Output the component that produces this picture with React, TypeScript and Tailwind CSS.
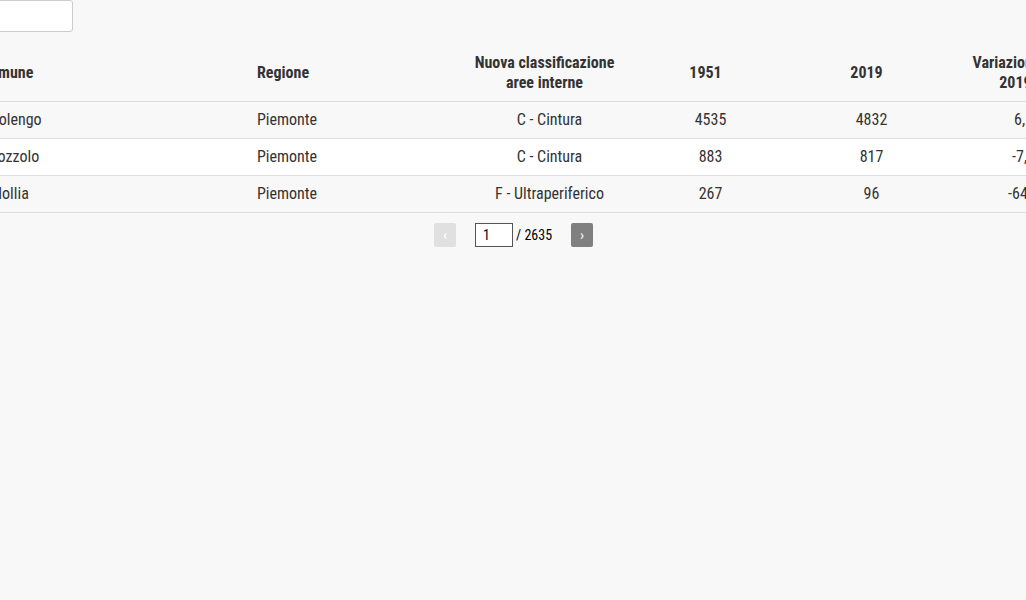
import React from 'react';

type Row = {
  comune: string;
  regione: string;
  classe: string;
  y1951: string;
  y2019: string;
  variazione: string;
};

const rows: Row[] = [
  { comune: 'Bolengo', regione: 'Piemonte', classe: 'C - Cintura', y1951: '4535', y2019: '4832', variazione: '6,55%' },
  { comune: 'Lozzolo', regione: 'Piemonte', classe: 'C - Cintura', y1951: '883', y2019: '817', variazione: '-7,47%' },
  { comune: 'Mollia', regione: 'Piemonte', classe: 'F - Ultraperiferico', y1951: '267', y2019: '96', variazione: '-64,04%' },
];

const th = 'pt-[11px] pb-[8px] font-bold text-[16px] whitespace-nowrap font-stretch-condensed';
const td = 'px-[10px] py-2 font-stretch-[78%]';

const App = () => {
  return (
    <div
      className="w-[1026px] h-[600px] overflow-hidden bg-[#f8f8f8] text-[#333]"
      style={{ fontFamily: 'Roboto, "Liberation Sans", sans-serif' }}
    >
      <div className="-ml-[29px] w-[1142px]">
        <input
          className="block w-[102px] h-[32px] bg-white border border-[#ccc] rounded-[3px]"
          readOnly
        />

        <table className="mt-[10px] w-[1142px] table-fixed border-collapse text-[16px] leading-5">
          <colgroup>
            <col className="w-[276px]" />
            <col className="w-[222px]" />
            <col className="w-[161px]" />
            <col className="w-[161px]" />
            <col className="w-[161px]" />
            <col className="w-[161px]" />
          </colgroup>
          <thead>
            <tr className="border-b border-[#ddd]">
              <th className={`${th} pl-[10px] pr-5 text-left`}>Comune</th>
              <th className={`${th} pl-[10px] pr-5 text-left`}>Regione</th>
              <th className={`${th} pl-[5px] pr-[15px] text-center`}>
                Nuova classificazione
                <br />
                aree interne
              </th>
              <th className={`${th} pl-[5px] pr-[15px] text-center`}>1951</th>
              <th className={`${th} pl-[5px] pr-[15px] text-center`}>2019</th>
              <th className={`${th} pl-[5px] pr-[15px] text-center`}>
                Variazione 1951-
                <br />
                2019 (%)
              </th>
            </tr>
          </thead>
          <tbody>
            {rows.map((r, i) => (
              <tr key={i} className={`border-b border-[#ddd] ${i % 2 === 1 ? 'bg-white' : ''}`}>
                <td className={`${td} pl-[19px] text-left`}>{r.comune}</td>
                <td className={`${td} text-left`}>{r.regione}</td>
                <td className={`${td} text-center`}>{r.classe}</td>
                <td className={`${td} text-center`}>{r.y1951}</td>
                <td className={`${td} text-center`}>{r.y2019}</td>
                <td className={`${td} text-center`}>{r.variazione}</td>
              </tr>
            ))}
          </tbody>
        </table>
      </div>

      <div className="mt-[10px] ml-[434px] flex items-center font-stretch-condensed">
        <button className="w-[22px] h-[24px] rounded-[2px] bg-[#e0e0e0] text-white text-[15px] leading-none">‹</button>
        <input
          className="ml-[19px] w-[38px] h-[24px] pl-[7px] bg-white border border-[#555] text-[14px] text-black"
          defaultValue="1"
        />
        <span className="ml-[3px] text-[14px] font-normal text-black">/ 2635</span>
        <button className="ml-[19px] w-[22px] h-[24px] rounded-[2px] bg-[#808080] text-white text-[15px] leading-none">›</button>
      </div>
    </div>
  );
};

export default App;
